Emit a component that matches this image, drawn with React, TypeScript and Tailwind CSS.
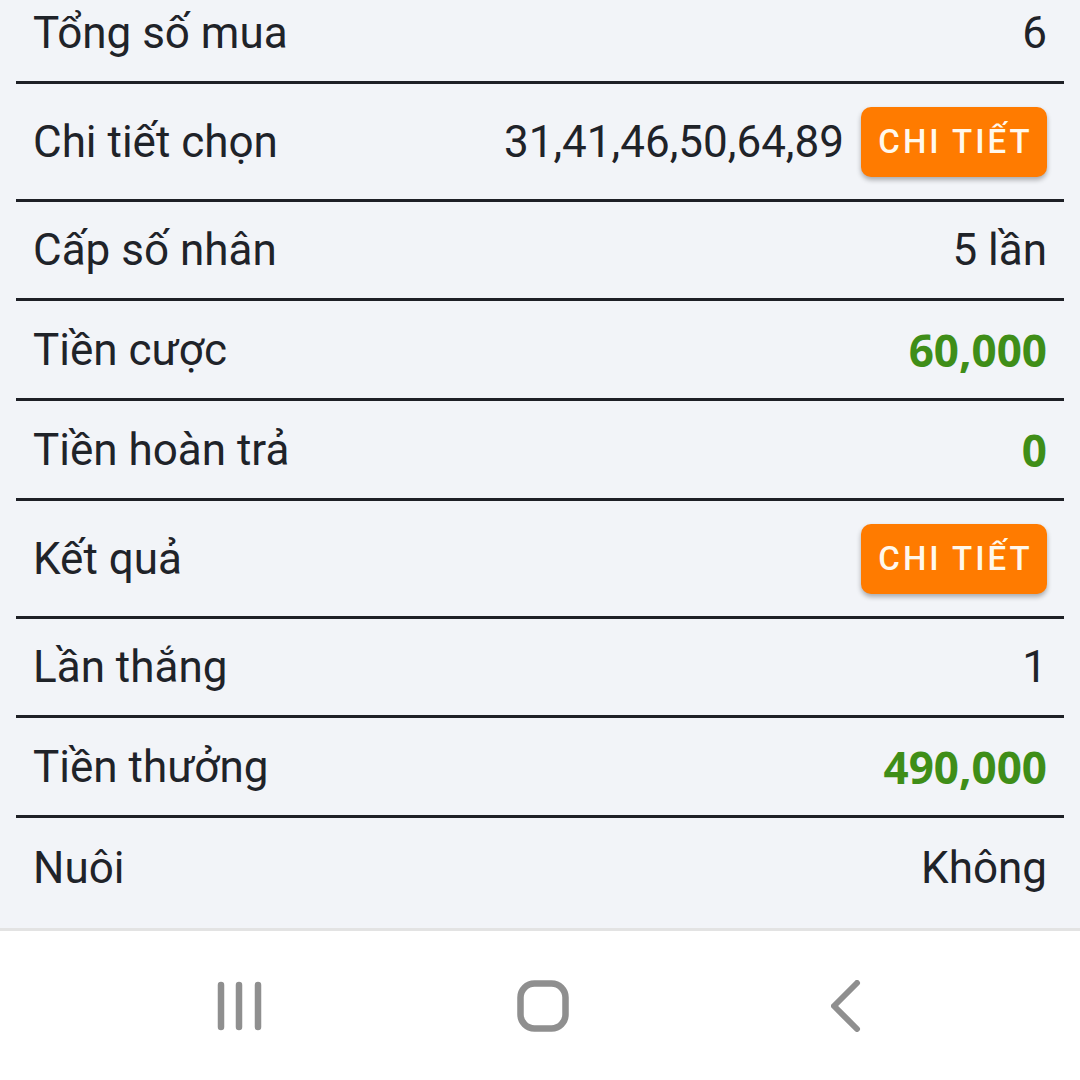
import React from 'react';

type Row = {
  label: string;
  value?: string;
  green?: boolean;
  button?: boolean;
  short?: boolean;
};

const rows: Row[] = [
  { label: 'Tổng số mua', value: '6' },
  { label: 'Chi tiết chọn', value: '31,41,46,50,64,89', button: true },
  { label: 'Cấp số nhân', value: '5 lần', short: true },
  { label: 'Tiền cược', value: '60,000', green: true },
  { label: 'Tiền hoàn trả', value: '0', green: true },
  { label: 'Kết quả', button: true },
  { label: 'Lần thắng', value: '1', short: true },
  { label: 'Tiền thưởng', value: '490,000', green: true },
  { label: 'Nuôi', value: 'Không' },
];

function DetailButton() {
  return (
    <button className="ml-[17px] h-[70px] w-[186px] rounded-[10px] bg-[#ff7b00] pl-[3px] text-[33px] font-medium tracking-[3px] text-[#fff8ec] shadow-[0_3px_5px_rgba(0,0,0,0.3)] [font-family:Roboto,sans-serif]">
      CHI TIẾT
    </button>
  );
}

export default function App() {
  return (
    <div className="flex h-[1080px] w-[1080px] flex-col bg-white [font-family:Roboto,sans-serif]">
      <div className="h-[928px] overflow-hidden bg-[#f2f4f8]">
        <div className="-mt-[16px] px-4">
          {rows.map((r, i) => (
            <div
              key={r.label}
              className={`flex items-center justify-between px-[17px] ${r.button ? 'h-[118px]' : r.short ? 'h-[99px]' : 'h-[100px]'} ${i < rows.length - 1 ? 'border-b-[3px] border-[#1e2026]' : ''}`}
            >
              <span className="text-[44px] text-[#1f2329]">{r.label}</span>
              <div className="flex items-center">
                {r.value && (
                  <span
                    className={
                      r.green
                        ? 'text-[44px] font-bold text-[#3f8e18] [font-family:"Open_Sans",sans-serif]'
                        : 'text-[44px] text-[#1f2329]'
                    }
                  >
                    {r.value}
                  </span>
                )}
                {r.button && <DetailButton />}
              </div>
            </div>
          ))}
        </div>
      </div>

      {/* thanh điều hướng */}
      <div className="flex flex-1 items-center justify-center border-t-[3px] border-[#e3e3e3] bg-white pl-[6px]">
        <div className="flex w-[303px] justify-center">
          <svg width="46" height="50" viewBox="0 0 46 50" fill="none" stroke="#8f8f8f" strokeWidth="6.5" strokeLinecap="round">
            <path d="M4 4v42M22 4v42M41 4v42" />
          </svg>
        </div>
        <div className="flex w-[303px] justify-center">
          <svg width="52" height="52" viewBox="0 0 52 52" fill="none" stroke="#8f8f8f" strokeWidth="6.5">
            <rect x="3.5" y="3.5" width="45" height="45" rx="14" />
          </svg>
        </div>
        <div className="flex w-[303px] justify-center">
          <svg width="30" height="52" viewBox="0 0 30 52" fill="none" stroke="#8f8f8f" strokeWidth="6" strokeLinecap="round" strokeLinejoin="round">
            <path d="M26 3L3 26l23 23" />
          </svg>
        </div>
      </div>
    </div>
  );
}
